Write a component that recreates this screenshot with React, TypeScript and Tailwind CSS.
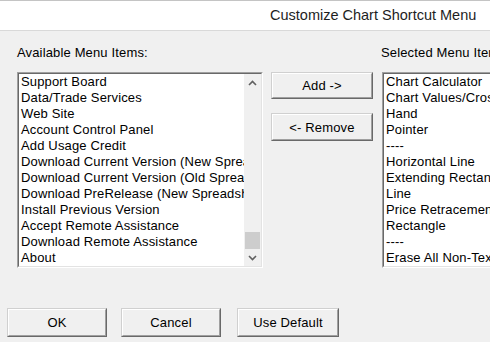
import React from "react";

const leftItems = [
  "Support Board",
  "Data/Trade Services",
  "Web Site",
  "Account Control Panel",
  "Add Usage Credit",
  "Download Current Version (New Spreadsheets)",
  "Download Current Version (Old Spreadsheets)",
  "Download PreRelease (New Spreadsheets)",
  "Install Previous Version",
  "Accept Remote Assistance",
  "Download Remote Assistance",
  "About",
];

const rightItems = [
  "Chart Calculator",
  "Chart Values/Crosshair",
  "Hand",
  "Pointer",
  "----",
  "Horizontal Line",
  "Extending Rectangle",
  "Line",
  "Price Retracement",
  "Rectangle",
  "----",
  "Erase All Non-Text",
];

function Btn({ label, w, h }: { label: string; w: string; h: string }) {
  return (
    <div
      className={`${w} ${h} border border-t-[#d0d0d0] border-l-[#d0d0d0] border-b-[#696969] border-r-[#696969]`}
    >
      <div className="w-full h-full border border-t-white border-l-white border-b-[#a0a0a0] border-r-[#a0a0a0] bg-[#f0f0f0] flex items-center justify-center text-[13px] tracking-[0.15px] text-black leading-none">
        {label}
      </div>
    </div>
  );
}

function Sunken({ children, w }: { children: React.ReactNode; w: string }) {
  return (
    <div className={`${w} h-[196px] shrink-0 border border-t-[#a0a0a0] border-l-[#a0a0a0] border-b-white border-r-white`}>
      <div className="w-full h-full border border-t-[#696969] border-l-[#696969] border-b-[#e3e3e3] border-r-[#e3e3e3] bg-white flex overflow-hidden">
        {children}
      </div>
    </div>
  );
}

export default function App() {
  return (
    <div
      className="w-[490px] h-[342px] overflow-hidden bg-[#f0f0f0] text-black"
      style={{ fontFamily: '"Liberation Sans", Arial, sans-serif' }}
    >
      <div className="h-[31px] bg-white border-t border-t-[#c4c4c4] border-b border-b-[#d9d9d9] flex items-center pl-[270px]">
        <span className="text-[14.5px] text-[#1e1e1e] whitespace-nowrap leading-none">
          Customize Chart Shortcut Menu
        </span>
      </div>

      <div className="mt-[14px] h-[16px] flex text-[13px] tracking-[0.15px] leading-[16px] whitespace-nowrap">
        <span className="ml-[17px] w-[364px] shrink-0">Available Menu Items:</span>
        <span className="shrink-0">Selected Menu Items:</span>
      </div>

      <div className="mt-[11px] flex items-start pl-[17px]">
        <Sunken w="w-[246px]">
          <div className="flex-1 min-w-0 pl-[2px] text-[13px] tracking-[0.15px] leading-[16px] whitespace-nowrap overflow-hidden">
            {leftItems.map((t, i) => (
              <div key={i} className="h-[16px]">
                {t}
              </div>
            ))}
          </div>
          <div className="w-[17px] h-full bg-[#f0f0f0] flex flex-col shrink-0">
            <div className="h-[17px] flex items-center justify-center">
              <svg width="9" height="6" viewBox="0 0 9 6">
                <path d="M1 5 L4.5 1.5 L8 5" stroke="#606060" strokeWidth="1.6" fill="none" />
              </svg>
            </div>
            <div className="flex-1 flex flex-col justify-end">
              <div className="h-[17px] mx-[1px] bg-[#cdcdcd]" />
            </div>
            <div className="h-[17px] flex items-center justify-center">
              <svg width="9" height="6" viewBox="0 0 9 6">
                <path d="M1 1 L4.5 4.5 L8 1" stroke="#606060" strokeWidth="1.6" fill="none" />
              </svg>
            </div>
          </div>
        </Sunken>

        <div className="ml-[8px] w-[102px] flex flex-col shrink-0">
          <Btn label="Add ->" w="w-[102px]" h="h-[27px]" />
          <div className="mt-[14px]">
            <Btn label="<- Remove" w="w-[102px]" h="h-[28px]" />
          </div>
        </div>

        <div className="ml-[9px] shrink-0">
          <Sunken w="w-[160px]">
            <div className="flex-1 min-w-0 pl-[2px] text-[13px] tracking-[0.15px] leading-[16px] whitespace-nowrap overflow-hidden">
              {rightItems.map((t, i) => (
                <div key={i} className="h-[16px]">
                  {t}
                </div>
              ))}
            </div>
          </Sunken>
        </div>
      </div>

      <div className="mt-[40px] flex pl-[7px]">
        <Btn label="OK" w="w-[100px]" h="h-[29px]" />
        <div className="ml-[14px]">
          <Btn label="Cancel" w="w-[100px]" h="h-[29px]" />
        </div>
        <div className="ml-[16px]">
          <Btn label="Use Default" w="w-[102px]" h="h-[29px]" />
        </div>
      </div>
    </div>
  );
}
